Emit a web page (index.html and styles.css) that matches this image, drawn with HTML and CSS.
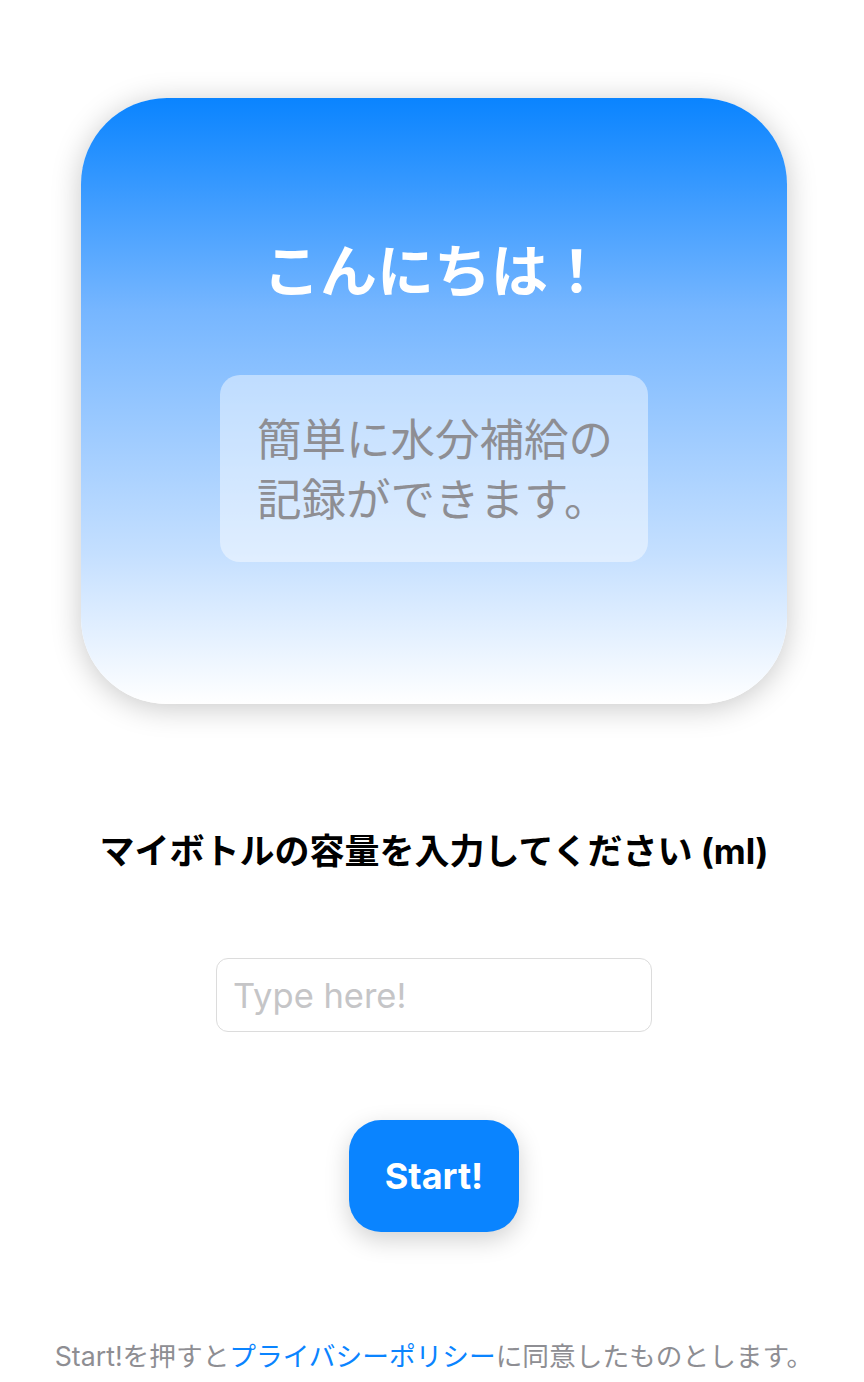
FILE: index.html
```html
<!DOCTYPE html>
<html lang="ja">
<head>
    <meta charset="UTF-8">
    <meta name="viewport" content="width=device-width, initial-scale=1.0">
    <title>マイボトル</title>
    <link rel="stylesheet" href="styles.css">
</head>
<body>
   <div class="hero">
      <h1 class="hero-title">こんにちは！</h1>
      <div class="hero-note">簡単に水分補給の<br>記録ができます。</div>
   </div>
   <p class="prompt">マイボトルの容量を入力してください (ml)</p>
   <input type="text" class="capacity" placeholder="Type here!">
   <button type="button" class="start">Start!</button>
   <p class="terms">Start!を押すと<a href="#">プライバシーポリシー</a>に同意したものとします。</p>
</body>
</html>
```

FILE: styles.css
```css
body {
    font-family: 'Inter', 'Noto Sans CJK JP', sans-serif;
    background-color: #fff;
    margin: 0;
    padding: 98px 0 0 4px;
    display: flex;
    flex-direction: column;
    align-items: center;
    min-height: 100vh;
    box-sizing: border-box;
}

.hero {
    width: 706px;
    height: 606px;
    border-radius: 86px;
    background: linear-gradient(#0a84ff 0%, #76b6ff 35%, #c4dfff 75%, #fff 100%);
    box-shadow: 0 4px 30px rgba(0, 0, 0, 0.22);
    display: flex;
    flex-direction: column;
    align-items: center;
}

.hero-title {
    color: #fff;
    font-size: 57px;
    font-weight: bold;
    margin: 138px 0 0;
    line-height: 72px;
}

.hero-note {
    margin-top: 67px;
    width: 428px;
    height: 187px;
    box-sizing: border-box;
    padding: 35px 0 0 37px;
    border-radius: 20px;
    background-color: rgba(255, 255, 255, 0.45);
    color: #8e8e93;
    font-size: 44.5px;
    line-height: 60px;
}

.prompt {
    margin: 124px 0 0;
    font-size: 35px;
    font-weight: bold;
    color: #000;
    line-height: 46px;
}

.capacity {
    margin-top: 84px;
    width: 436px;
    height: 74px;
    box-sizing: border-box;
    border: 1px solid #dcdcdc;
    border-radius: 12px;
    padding: 0 16px;
    font-family: inherit;
    font-size: 34.5px;
    outline: none;
}

.capacity::placeholder {
    color: #c5c5c7;
}

.start {
    margin-top: 88px;
    width: 170px;
    height: 112px;
    border: none;
    border-radius: 32px;
    background-color: #0a84ff;
    color: #fff;
    font-family: inherit;
    font-size: 36px;
    font-weight: bold;
    box-shadow: 0 8px 24px rgba(0, 0, 0, 0.18);
    cursor: pointer;
}

.terms {
    margin: 106px 0 0;
    font-size: 26.7px;
    color: #8e8e93;
    line-height: 36px;
}

.terms a {
    color: #0a84ff;
    text-decoration: none;
}
```
